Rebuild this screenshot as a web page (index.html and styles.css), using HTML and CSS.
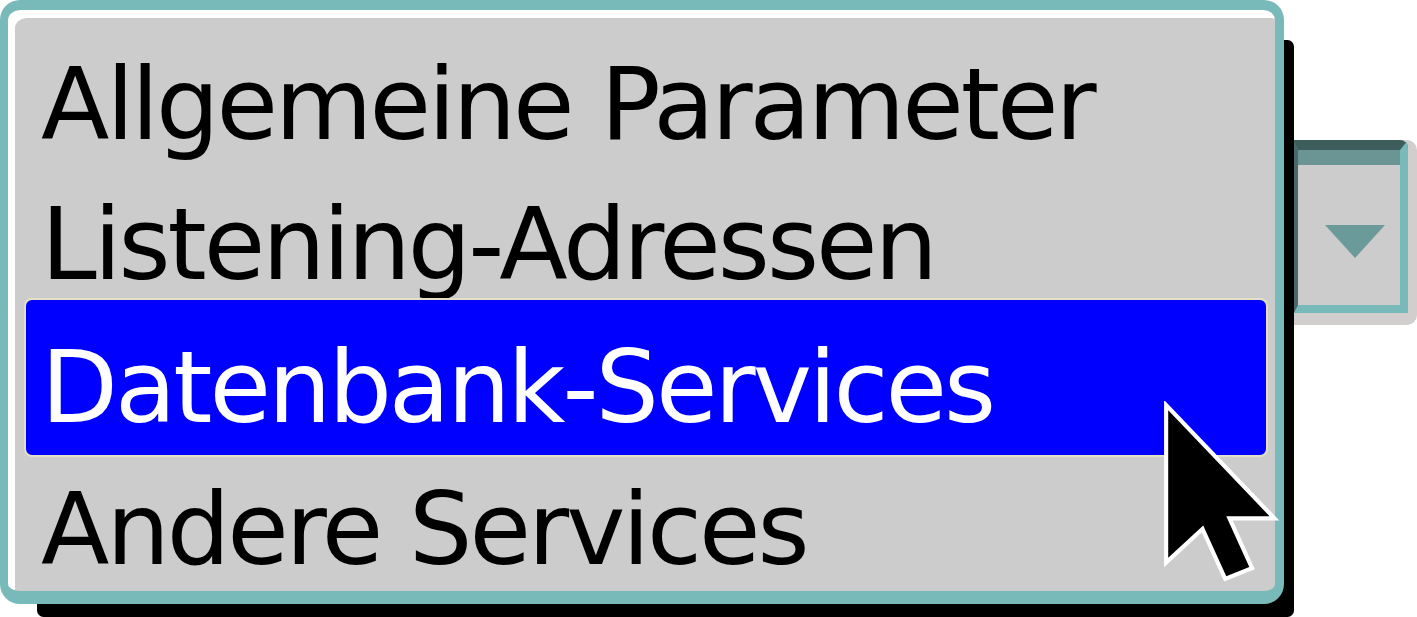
FILE: index.html
```html
<!DOCTYPE html>
<html lang="de">
<head>
    <meta charset="UTF-8">
    <meta name="viewport" content="width=device-width, initial-scale=1.0">
    <title>Auswahlliste</title>
    <link rel="stylesheet" href="styles.css">
</head>
<body>

    <div class="screen">
        <div class="popup">
            <div class="list">
                <div class="item">Allgemeine Parameter</div>
                <div class="item">Listening-Adressen</div>
                <div class="item selected">Datenbank-Services</div>
                <div class="item last">Andere Services</div>
            </div>
        </div>

        <div class="combo">
            <div class="combo-btn">
                <span class="arrow"></span>
            </div>
        </div>

        <svg class="cursor" viewBox="-1 -1 14 20.5" width="129" height="189">
            <polygon points="0,0 0,16 3.8,12.5 6.3,18 8.8,17 6.3,11.5 11,11.5"
                     fill="#000" stroke="#fff" stroke-width="0.9"
                     stroke-linejoin="miter" paint-order="stroke"/>
        </svg>
    </div>

</body>
</html>
```

FILE: styles.css
```css
body {
    margin: 0;
    background-color: #ffffff;
    font-family: "DejaVu Sans", "Liberation Sans", sans-serif;
    overflow: hidden;
}
.screen {
    position: relative;
    display: flex;
    align-items: flex-start;
    width: 1417px;
    height: 617px;
}
.popup {
    box-sizing: border-box;
    width: 1284px;
    height: 604px;
    flex-shrink: 0;
    border-style: solid;
    border-color: #78b9b9;
    border-width: 10px 9px 13px 8px;
    border-radius: 20px;
    padding: 8px 0 0 7px;
    background-color: #cccccc;
    box-shadow: inset 7px 8px 0 #ffffff, 23.5px 26.5px 0 -13.5px #000000;
}
.list {
    display: flex;
    flex-direction: column;
}
.item {
    font-size: 100px;
    line-height: 100px;
    letter-spacing: -3px;
    color: #000000;
    padding: 37px 0 3px 26px;
    white-space: nowrap;
}
.item.selected {
    margin: 0 7px 0 9px;
    padding: 38px 0 17px 15px;
    border: 2px solid #e4e0c6;
    border-radius: 8px;
    background-color: #0000ff;
    color: #ffffff;
}
.item.last {
    padding-top: 23px;
}
.combo {
    box-sizing: border-box;
    width: 123px;
    height: 185px;
    margin-top: 140px;
    margin-left: 10px;
    background-color: #d2cece;
    border-radius: 0 10px 10px 0;
}
.combo-btn {
    box-sizing: border-box;
    width: 114px;
    height: 173px;
    border-style: solid;
    border-width: 10px 8px 8px 4px;
    border-color: #3d5c5c #78b9b9 #78b9b9 #4a6a6a;
    border-radius: 0 8px 0 0;
    background-color: #cccccc;
    box-shadow: inset 0 15px 0 #6b9494;
    display: flex;
    justify-content: center;
    align-items: center;
    padding: 27px 0 0 12px;
}
.arrow {
    width: 0;
    height: 0;
    border-left: 30px solid transparent;
    border-right: 30px solid transparent;
    border-top: 33px solid #6b9a9a;
}
.cursor {
    position: absolute;
    left: 1159px;
    top: 401px;
}
```
